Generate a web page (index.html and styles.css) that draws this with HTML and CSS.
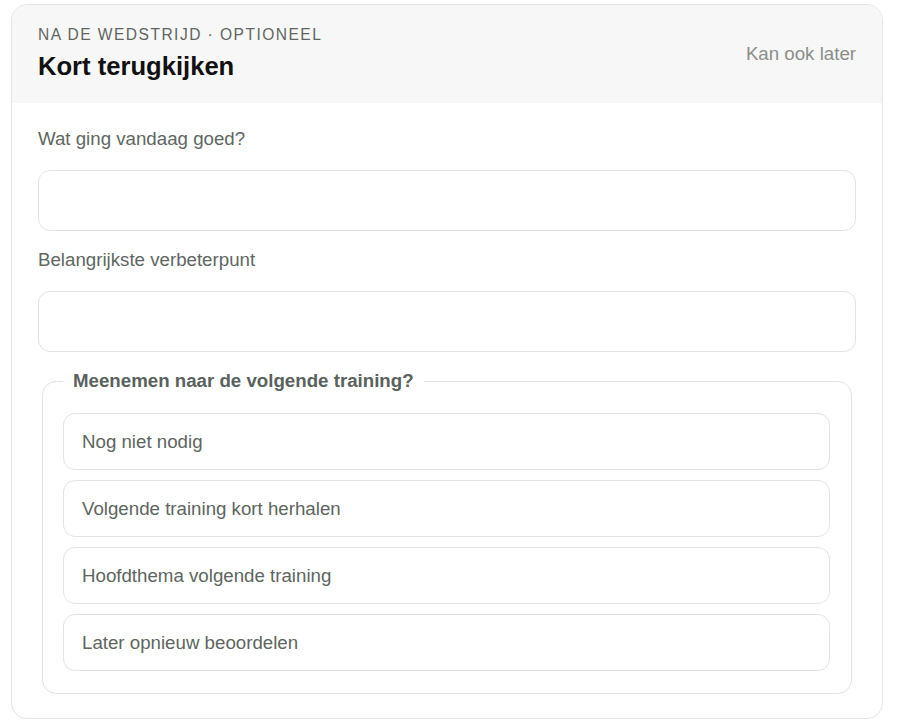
FILE: index.html
```html
<!DOCTYPE html>
<html lang="nl">
<head>
  <meta charset="UTF-8">
  <meta name="viewport" content="width=device-width, initial-scale=1.0">
  <title>Kort terugkijken</title>
  <link rel="stylesheet" href="styles.css">
</head>
<body>

  <!-- Review card -->
  <div class="card">
    <div class="card-header">
      <div class="titles">
        <div class="eyebrow">Na de wedstrijd · Optioneel</div>
        <h2>Kort terugkijken</h2>
      </div>
      <span class="later">Kan ook later</span>
    </div>

    <form class="card-body">
      <div class="field">
        <label for="goed">Wat ging vandaag goed?</label>
        <input type="text" id="goed">
      </div>

      <div class="field">
        <label for="verbeter">Belangrijkste verbeterpunt</label>
        <input type="text" id="verbeter">
      </div>

      <fieldset class="choices">
        <legend>Meenemen naar de volgende training?</legend>
        <label class="option"><input type="radio" name="meenemen" value="niet">Nog niet nodig</label>
        <label class="option"><input type="radio" name="meenemen" value="kort">Volgende training kort herhalen</label>
        <label class="option"><input type="radio" name="meenemen" value="hoofd">Hoofdthema volgende training</label>
        <label class="option"><input type="radio" name="meenemen" value="later">Later opnieuw beoordelen</label>
      </fieldset>
    </form>
  </div>

</body>
</html>
```

FILE: styles.css
```css
/* Basic Styles */
* {
  margin: 0;
  padding: 0;
  box-sizing: border-box;
  font-family: 'Liberation Sans', Arial, sans-serif;
}

body {
  background-color: #fff;
  color: #111;
  padding: 4px 0 0 11px;
}

.card {
  width: 872px;
  border: 1px solid #e5e5e5;
  border-radius: 16px;
  overflow: hidden;
  background-color: #fff;
}

.card-header {
  display: flex;
  align-items: center;
  justify-content: space-between;
  background-color: #f7f7f7;
  padding: 20px 26px 21px 26px;
}

.eyebrow {
  font-size: 15.6px;
  line-height: 20px;
  text-transform: uppercase;
  letter-spacing: 1.45px;
  color: #5f6661;
  margin-bottom: 6px;
}

.card-header h2 {
  font-size: 25.6px;
  line-height: 31px;
  font-weight: bold;
  color: #111;
}

.later {
  font-size: 18.7px;
  color: #8a8e8a;
}

.card-body {
  padding: 24px 26px 24px 26px;
}

.field {
  margin-bottom: 17px;
}

.field label {
  display: block;
  font-size: 18.7px;
  line-height: 24px;
  color: #5e6762;
  margin-bottom: 19px;
}

.field input {
  display: block;
  width: 100%;
  height: 61px;
  border: 1.5px solid #e3e3e3;
  border-radius: 12px;
  background-color: #fff;
  padding: 0 18px;
  font-size: 18.7px;
  outline: none;
}

/* Choice group */
.choices {
  margin: 0 4px;
  border: 1.5px solid #e3e3e3;
  border-radius: 14px;
  padding: 20px 21px 22px 20px;
  display: flex;
  flex-direction: column;
  gap: 10px;
}

.choices legend {
  padding: 0 10px;
  font-size: 18.7px;
  line-height: 24px;
  font-weight: bold;
  color: #5a625d;
}

.option {
  display: flex;
  align-items: center;
  height: 57px;
  border: 1.5px solid #e3e3e3;
  border-radius: 12px;
  padding: 0 18px;
  font-size: 18.7px;
  color: #5d6660;
  cursor: pointer;
}

.option input {
  display: none;
}
```
